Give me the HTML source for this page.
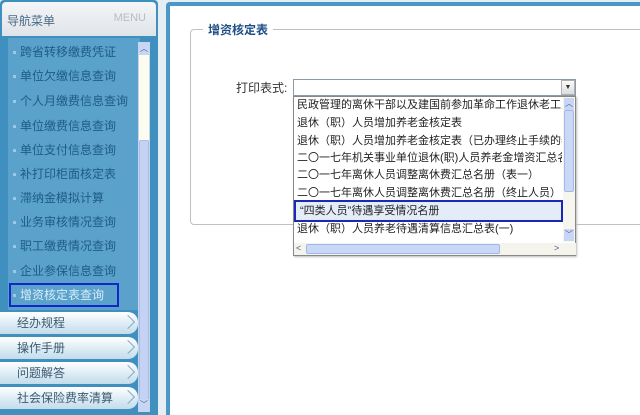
<!DOCTYPE html>
<html style="width:640px;height:415px;overflow:hidden"><head><meta charset="utf-8">
<style>
*{margin:0;padding:0;box-sizing:border-box}
body{width:640px;height:415px;overflow:hidden;background:#e6edf3;font-family:"Liberation Sans","Noto Sans CJK SC",sans-serif;font-size:12px;position:relative}
.abs{position:absolute}
#left{left:0;top:0;width:158px;height:415px;background:#3f8fbf;border-radius:4px 4px 0 0}
#hdr{left:2px;top:2px;width:154px;height:34px;background:linear-gradient(#f4f6f8,#dfe4e8);border-radius:4px 4px 0 0}
#hdr .t{left:5px;top:10px;color:#4a6a86;font-size:12px}
#hdr .m{right:10px;top:10px;color:#b8bcc0;font-size:11px}
#list{left:8px;top:38px;width:132px;height:272px;background:#5aa2cb}
.it{position:absolute;left:0;width:132px;height:24px;line-height:24px;color:#1e5c86;font-size:12px;padding-left:12px}
.it:before{content:"";position:absolute;left:5px;top:11px;width:3px;height:3px;background:#9cc8e4}
#sel{left:9px;top:283px;width:110px;height:24px;border:2px solid #1428c8}
.bar{position:absolute;left:0;width:138px;height:22px;background:linear-gradient(#ffffff,#d8eaf4 60%,#c4dcea);border-radius:0 10px 10px 0;color:#3c5a70;font-size:12px;line-height:22px;padding-left:17px}
.bar:after{content:"";position:absolute;right:5px;top:5px;width:9px;height:9px;border-right:1.5px solid #8aaabf;border-top:1.5px solid #8aaabf;transform:rotate(45deg)}
#sb{left:138px;top:42px;width:12px;height:370px;background:#fbfbf0;border:1px solid #c8d4e8}
#thumb{left:139px;top:140px;width:10px;height:265px;background:#c4d2f4;border:1px solid #a8bce8;border-radius:2px}
.sbb{position:absolute;width:10px;height:12px;background:#c8d6f6;color:#4a5a90;font-size:8px;text-align:center;line-height:12px}
#right{left:166px;top:2px;width:474px;height:413px;border:4px solid #4b97c6;border-right:none;border-bottom:none;border-radius:4px 0 0 0;background:#fff}
#fs{left:190px;top:29px;width:460px;height:196px;border:1px solid #c0c0c0;border-radius:4px}
#lg{left:203px;top:21px;background:#fff;padding:0 5px;color:#1f4f88;font-weight:bold;font-size:12px}
#lbl{left:236px;top:79px;color:#333;font-size:12px}
#inp{left:293px;top:79px;width:283px;height:17px;border:1px solid #8a9aa8;background:#fff}
#ddb{left:561px;top:80px;width:14px;height:15px;background:linear-gradient(#fafafa,#dcdcdc);border:1px solid #b0b0b0;font-size:7px;text-align:center;line-height:14px;color:#333}
#dd{left:293px;top:96px;width:283px;height:160px;border:1px solid #888;background:#fff;box-shadow:1px 1px 2px #bbb}
.o{position:absolute;left:3px;height:18px;line-height:18px;font-size:11px;color:#222;white-space:nowrap;width:265px;overflow:hidden}
#hl{left:294px;top:200px;width:269px;height:22px;border:2px solid #1a28b8;background:#e4ecf8}
#vs{left:563px;top:97px;width:12px;height:145px;background:#f6f6ee}
#vt{left:564px;top:110px;width:10px;height:82px;background:#c8d8f6;border:1px solid #a4b8e8;border-radius:2px}
#hs{left:294px;top:243px;width:282px;height:12px;background:#f4f4ec}
#ht{left:306px;top:244px;width:194px;height:10px;background:#c8d8f6;border:1px solid #a4b8e8;border-radius:2px}
</style></head><body>
<div id="left" class="abs"></div>
<div id="hdr" class="abs"><span class="t abs">导航菜单</span><span class="m abs">MENU</span></div>
<div id="list" class="abs">
<div class="it" style="top:2px">跨省转移缴费凭证</div>
<div class="it" style="top:26px">单位欠缴信息查询</div>
<div class="it" style="top:51px">个人月缴费信息查询</div>
<div class="it" style="top:76px">单位缴费信息查询</div>
<div class="it" style="top:100px">单位支付信息查询</div>
<div class="it" style="top:124px">补打印柜面核定表</div>
<div class="it" style="top:148px">滞纳金模拟计算</div>
<div class="it" style="top:172px">业务审核情况查询</div>
<div class="it" style="top:196px">职工缴费情况查询</div>
<div class="it" style="top:221px">企业参保信息查询</div>
<div class="it" style="top:245px;color:#d8ecf8">增资核定表查询</div>
</div>
<div id="sel" class="abs"></div>
<div class="bar" style="top:312px">经办规程</div>
<div class="bar" style="top:337px">操作手册</div>
<div class="bar" style="top:362px">问题解答</div>
<div class="bar" style="top:387px">社会保险费率清算</div>
<div id="sb" class="abs"></div>
<div id="thumb" class="abs"></div>
<div class="sbb" style="left:139px;top:43px">︿</div>
<div class="sbb" style="left:139px;top:399px">﹀</div>

<div id="right" class="abs"></div>
<div id="fs" class="abs"></div>
<div id="lg" class="abs">增资核定表</div>
<div id="lbl" class="abs">打印表式:</div>
<div id="inp" class="abs"></div>
<div id="ddb" class="abs">▼</div>
<div id="dd" class="abs"></div>
<div id="hl" class="abs"></div>
<div class="abs" style="left:294px;top:96px">
<div class="o" style="top:0">民政管理的离休干部以及建国前参加革命工作退休老工人增发补</div>
<div class="o" style="top:18px">退休（职）人员增加养老金核定表</div>
<div class="o" style="top:36px">退休（职）人员增加养老金核定表（已办理终止手续的养老人员</div>
<div class="o" style="top:53px">二〇一七年机关事业单位退休(职)人员养老金增资汇总名册</div>
<div class="o" style="top:70px">二〇一七年离休人员调整离休费汇总名册（表一）</div>
<div class="o" style="top:88px">二〇一七年离休人员调整离休费汇总名册（终止人员）（表二</div>
<div class="o" style="top:106px;left:6px">“四类人员”待遇享受情况名册</div>
<div class="o" style="top:124px">退休（职）人员养老待遇清算信息汇总表(一)</div>
</div>
<div id="vs" class="abs"></div>
<div id="vt" class="abs"></div>
<div class="sbb" style="left:564px;top:98px">︿</div>
<div class="sbb" style="left:564px;top:229px">﹀</div>
<div id="hs" class="abs"></div>
<div id="ht" class="abs"></div>
<div class="abs" style="left:296px;top:243px;font-size:9px;color:#4a5a90">&lt;</div>
<div class="abs" style="left:554px;top:243px;font-size:9px;color:#4a5a90">&gt;</div>
</body></html>
